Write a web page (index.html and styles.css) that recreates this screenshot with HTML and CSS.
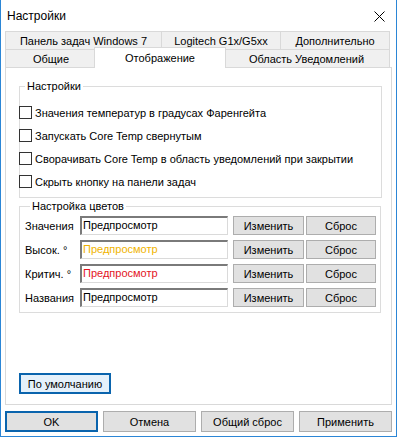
FILE: index.html
```html
<!DOCTYPE html>
<html lang="ru">
<head>
  <meta charset="UTF-8">
  <title>Настройки</title>
  <link rel="stylesheet" href="styles.css">
</head>
<body>
  <div class="window">
    <div class="titlebar">
      <span class="title">Настройки</span>
      <svg class="close" width="11" height="11" viewBox="0 0 11 11">
        <path d="M0.5 0.5 L10.5 10.5 M10.5 0.5 L0.5 10.5" stroke="#000" stroke-width="1" fill="none"/>
      </svg>
    </div>

    <div class="content">
      <div class="tabs">
        <div class="tab-row">
          <div class="tab w157">Панель задач Windows 7</div>
          <div class="tab w120">Logitech G1x/G5xx</div>
          <div class="tab w110">Дополнительно</div>
        </div>
        <div class="tab-row">
          <div class="tab w92">Общие</div>
          <div class="tab w128 active">Отображение</div>
          <div class="tab w167">Область Уведомлений</div>
        </div>
      </div>

      <div class="panel">
        <fieldset class="group options">
          <legend>Настройки</legend>
          <label class="check"><span class="box"></span>Значения температур в градусах Фаренгейта</label>
          <label class="check"><span class="box"></span>Запускать Core Temp свернутым</label>
          <label class="check"><span class="box"></span>Сворачивать Core Temp в область уведомлений при закрытии</label>
          <label class="check"><span class="box"></span>Скрыть кнопку на панели задач</label>
        </fieldset>

        <fieldset class="group colors">
          <legend>Настройка цветов</legend>
          <div class="color-row">
            <span class="color-label">Значения</span>
            <div class="edit">Предпросмотр</div>
            <button class="btn change">Изменить</button>
            <button class="btn reset">Сброс</button>
          </div>
          <div class="color-row">
            <span class="color-label">Высок. °</span>
            <div class="edit high">Предпросмотр</div>
            <button class="btn change">Изменить</button>
            <button class="btn reset">Сброс</button>
          </div>
          <div class="color-row">
            <span class="color-label">Критич. °</span>
            <div class="edit critical">Предпросмотр</div>
            <button class="btn change">Изменить</button>
            <button class="btn reset">Сброс</button>
          </div>
          <div class="color-row">
            <span class="color-label">Названия</span>
            <div class="edit">Предпросмотр</div>
            <button class="btn change">Изменить</button>
            <button class="btn reset">Сброс</button>
          </div>
        </fieldset>

        <button class="btn defaults">По умолчанию</button>
      </div>

      <div class="footer">
        <button class="btn focused">OK</button>
        <button class="btn">Отмена</button>
        <button class="btn">Общий сброс</button>
        <button class="btn">Применить</button>
      </div>
    </div>
  </div>
</body>
</html>
```

FILE: styles.css
```css
body {
  margin: 0;
  font-family: "Liberation Sans", Arial, sans-serif;
  font-size: 11px;
  color: #000;
  background: #fff;
}
.window {
  width: 397px;
  height: 437px;
  box-sizing: border-box;
  border: 1px solid #2b86d6;
  border-top: none;
  background: #fff;
  display: flex;
  flex-direction: column;
}
.titlebar {
  height: 30px;
  display: flex;
  align-items: center;
  padding-left: 6px;
  flex-shrink: 0;
}
.title {
  font-size: 12px;
  padding-top: 1px;
}
.close {
  margin-left: auto;
  margin-right: 11px;
  margin-top: 2px;
}
.content {
  flex: 1;
  display: flex;
  flex-direction: column;
  padding: 1px 4px 4px;
}

/* tabs */
.tab-row {
  display: flex;
  height: 18px;
}
.tab {
  box-sizing: border-box;
  height: 18px;
  border: 1px solid #d9d9d9;
  border-bottom: none;
  background: #f0f0f0;
  display: flex;
  align-items: center;
  justify-content: center;
  white-space: nowrap;
  padding-top: 1px;
}
.tab + .tab {
  margin-left: -1px;
}
.tab.active {
  position: relative;
  z-index: 1;
  background: #fff;
  height: 21px;
  margin: -2px -2px -1px -3px;
  padding-top: 0;
  padding-bottom: 1px;
}
.tab.active.w128 { width: 132px; }
.w157 { width: 157px; }
.w120 { width: 120px; }
.w110 { width: 110px; }
.w92 { width: 92px; }
.w128 { width: 128px; }
.w167 { width: 167px; }

/* panel */
.panel {
  flex: 1;
  box-sizing: border-box;
  border: 1px solid #d9d9d9;
  background: #fff;
  display: flex;
  flex-direction: column;
  padding: 10px 0 10px 13px;
}
.group {
  box-sizing: border-box;
  width: 363px;
  margin: 0;
  border: 1px solid #dcdcdc;
  padding: 0;
}
.group legend {
  line-height: 16px;
  padding: 0 2px;
  margin-left: 5px;
}
.options {
  height: 120px;
  padding-top: 7px;
}
.check {
  display: flex;
  align-items: center;
  height: 23px;
  white-space: nowrap;
}
.box {
  box-sizing: border-box;
  width: 13px;
  height: 13px;
  border: 1px solid #333;
  background: #fff;
  margin-left: -1px;
  margin-right: 3px;
  flex-shrink: 0;
}
.colors {
  width: 362px;
  padding: 2px 0 5px 5px;
}
.color-row {
  display: flex;
  align-items: center;
  height: 19px;
}
.color-row + .color-row {
  margin-top: 5px;
}
.color-label {
  width: 55px;
  flex-shrink: 0;
}
.edit {
  box-sizing: border-box;
  width: 148px;
  height: 19px;
  border-style: solid;
  border-width: 2px 1px 1px 2px;
  border-color: #7a7a7a #dadada #dadada #7a7a7a;
  line-height: 15px;
  padding-left: 1px;
  white-space: nowrap;
}
.edit.high { color: #f0b400; }
.edit.critical { color: #e3141e; }

.btn {
  box-sizing: border-box;
  font-family: inherit;
  font-size: 11px;
  color: #000;
  background: #e1e1e1;
  border: 1px solid #adadad;
  border-radius: 0;
  padding: 0;
  margin: 0;
  height: 19px;
}
.change {
  width: 71px;
  margin-left: 5px;
}
.reset {
  width: 70px;
  margin-left: 2px;
}
.defaults {
  width: 92px;
  height: 21px;
  margin-top: auto;
  border: 2px solid #0a64ad;
  background: #e5f1fb;
}

/* footer */
.footer {
  display: grid;
  grid-template-columns: repeat(4, 1fr);
  gap: 5px;
  margin-top: 6px;
}
.footer .btn {
  height: 21px;
}
.footer .focused {
  border: 2px solid #0a64ad;
}
```
